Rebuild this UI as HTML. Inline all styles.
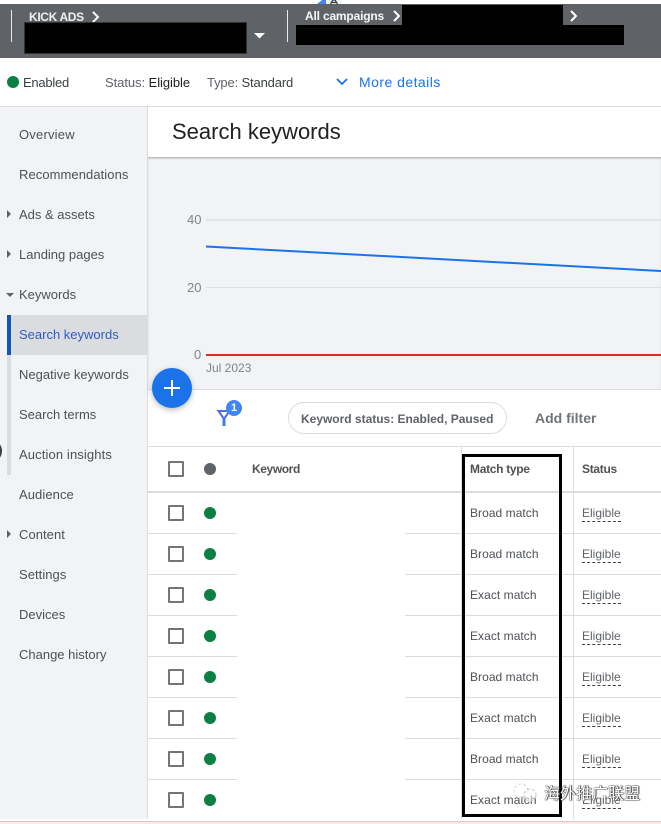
<!DOCTYPE html>
<html><head><meta charset="utf-8"><style>
html,body{margin:0;padding:0;background:#fff}
#p{position:relative;width:661px;height:824px;overflow:hidden;background:#fff;font-family:"Liberation Sans",Arial,sans-serif;font-size:13px;color:#5f6368}
#p div,#p span.a{position:absolute}
.t{white-space:nowrap;line-height:16px}
.nav{left:19px;color:#4d5156;font-size:13px;letter-spacing:0}
.h{background:#dadce0;height:1px}
.v{background:#dadce0;width:1px}
.cb{left:168px;width:12px;height:12px;border:2px solid #757575;border-radius:1px}
.dot{left:204px;width:12px;height:12px;border-radius:50%;background:#0b8043}
.m{left:470px;font-size:12px;color:#4d5156;letter-spacing:.05px}
.e{left:582px;font-size:12px;color:#5f6368;border-bottom:1px dashed #3c4043;line-height:14px;height:15px}
.bk{background:#000}
.th{font-size:12px;color:#3c4043;font-weight:bold;opacity:.9;top:461px}
</style></head><body><div id="p">
<div style="left:0;top:4px;width:661px;height:54px;background:#5f6368"></div>
<svg style="position:absolute;left:316px;top:0" width="28" height="6"><path d="M1 4L6 0h6v4z" fill="#4285f4"/><path d="M10 0h16v3q0 1-1 1H10z" fill="#f1f3f4"/><path d="M14.500 4L17 0h2l2.500 4M16 2.500h4" fill="none" stroke="#3c4043" stroke-width="1.300"/></svg>
<div class="v" style="left:11px;top:10px;height:32px;background:#e8eaed"></div>
<div class="v" style="left:287px;top:10px;height:32px;background:#e8eaed"></div>
<div class="t" style="left:29px;top:9px;color:#fff;font-size:12px;font-weight:bold;opacity:.9;letter-spacing:-.35px">KICK ADS</div>
<svg style="position:absolute;left:90px;top:10px" width="12" height="14"><path d="M3 2l5 5-5 5" fill="none" stroke="#fff" stroke-width="2"/></svg>
<div class="bk" style="left:24px;top:22px;width:223px;height:32px;border:1px solid #333;box-sizing:border-box"></div>
<svg style="position:absolute;left:253px;top:32px" width="14" height="8"><path d="M1 1h11L6.500 6.500z" fill="#fff"/></svg>
<div class="t" style="left:305px;top:8px;color:#fff;font-size:12px;opacity:.95;font-weight:bold;letter-spacing:-.18px">All campaigns</div>
<svg style="position:absolute;left:391px;top:9px" width="12" height="14"><path d="M3 2l5 5-5 5" fill="none" stroke="#fff" stroke-width="2"/></svg>
<div class="bk" style="left:402px;top:5px;width:161px;height:22px"></div>
<svg style="position:absolute;left:568px;top:9px" width="12" height="14"><path d="M3 2l5 5-5 5" fill="none" stroke="#fff" stroke-width="2"/></svg>
<div class="bk" style="left:296px;top:25px;width:328px;height:20px"></div>

<div style="left:7px;top:76px;width:12px;height:12px;border-radius:50%;background:#0b8043"></div>
<div class="t" style="left:23px;top:75px;color:#3c4043;letter-spacing:-.25px">Enabled</div>
<div class="t" style="left:105px;top:75px;color:#5f6368;letter-spacing:-.06px">Status: <span style="color:#202124">Eligible</span></div>
<div class="t" style="left:207px;top:75px;color:#5f6368;letter-spacing:-.15px">Type: <span style="color:#3c4043">Standard</span></div>
<svg style="position:absolute;left:335px;top:77px" width="14" height="10"><path d="M2 2l5 5 5-5" fill="none" stroke="#1a73e8" stroke-width="1.800"/></svg>
<div class="t" style="left:359px;top:74px;color:#1a73e8;font-size:14px;font-weight:500;letter-spacing:.46px">More details</div>
<div class="h" style="left:0;top:106px;width:661px;height:1px"></div>

<div style="left:0;top:107px;width:147px;height:712px;background:#f1f3f4"></div>
<div class="v" style="left:147px;top:107px;height:712px"></div>
<div style="left:7px;top:315px;width:140px;height:40px;background:#dadce0"></div>
<div style="left:7px;top:315px;width:4px;height:40px;background:#1557b0"></div>
<div style="left:7px;top:355px;width:4px;height:120px;background:#dadce0"></div>
<div style="left:-8px;top:443px;width:10px;height:16px;border-radius:50%;background:#3c4043"></div>
<div class="t nav" style="top:127px;letter-spacing:.2px">Overview</div>
<div class="t nav" style="top:167px;letter-spacing:.07px">Recommendations</div>
<div class="t nav" style="top:207px">Ads &amp; assets</div>
<div class="t nav" style="top:247px">Landing pages</div>
<div class="t nav" style="top:287px">Keywords</div>
<div class="t nav" style="top:327px;color:#2f5cc2">Search keywords</div>
<div class="t nav" style="top:367px">Negative keywords</div>
<div class="t nav" style="top:407px">Search terms</div>
<div class="t nav" style="top:447px;letter-spacing:.12px">Auction insights</div>
<div class="t nav" style="top:487px;letter-spacing:.08px">Audience</div>
<div class="t nav" style="top:527px;letter-spacing:.05px">Content</div>
<div class="t nav" style="top:567px;letter-spacing:.05px">Settings</div>
<div class="t nav" style="top:607px">Devices</div>
<div class="t nav" style="top:647px">Change history</div>
<svg style="position:absolute;left:5px;top:208px" width="8" height="12"><path d="M2 2l4 4-4 4z" fill="#5f6368"/></svg>
<svg style="position:absolute;left:5px;top:248px" width="8" height="12"><path d="M2 2l4 4-4 4z" fill="#5f6368"/></svg>
<svg style="position:absolute;left:5px;top:290px" width="10" height="10"><path d="M1 3h8L5 7z" fill="#5f6368"/></svg>
<svg style="position:absolute;left:5px;top:528px" width="8" height="12"><path d="M2 2l4 4-4 4z" fill="#5f6368"/></svg>

<div class="t" style="left:172px;top:118px;font-size:22px;line-height:28px;color:#202124">Search keywords</div>
<div style="left:148px;top:157px;width:513px;height:232px;background:#f1f3f4;box-shadow:inset 0 2px 2px -1px rgba(60,64,67,.45)"></div>
<div class="h" style="left:206px;top:219px;width:455px;height:2px;background:#e3e4e6"></div>
<div class="h" style="left:206px;top:287px;width:455px;background:#dcdee0"></div>
<svg style="position:absolute;left:206px;top:240px" width="455" height="120"><path d="M0 6.500L455 31" fill="none" stroke="#1a73e8" stroke-width="2"/></svg>
<div style="left:206px;top:354px;width:455px;height:2px;background:#d93025"></div>
<div class="t" style="left:187px;top:212px;color:#80868b">40</div>
<div class="t" style="left:187px;top:280px;color:#80868b">20</div>
<div class="t" style="left:194px;top:347px;color:#80868b">0</div>
<div class="t" style="left:206px;top:360px;color:#80868b;font-size:12px">Jul 2023</div>
<div class="h" style="left:148px;top:389px;width:513px"></div>

<div style="left:152px;top:368px;width:40px;height:40px;border-radius:50%;background:#1a73e8;box-shadow:0 2px 6px rgba(60,64,67,.35)"></div>
<div style="left:164px;top:387px;width:16px;height:2px;background:#fff"></div>
<div style="left:171px;top:380px;width:2px;height:16px;background:#fff"></div>

<svg style="position:absolute;left:215px;top:408px" width="20" height="20"><path d="M3.500 3h11L9 11z" fill="none" stroke="#4a6cf0" stroke-width="2"/><path d="M7.500 10h3v8h-3z" fill="#3f7bf0"/></svg>
<div style="left:226px;top:400px;width:16px;height:16px;border-radius:50%;background:#4285f4"></div>
<div class="t" style="left:226px;top:400px;width:16px;text-align:center;color:#fff;font-size:11px;font-weight:bold">1</div>

<div style="left:288px;top:402px;width:217px;height:30px;border:1px solid #dadce0;border-radius:16px"></div>
<div class="t" style="left:301px;top:411px;color:#5f6368;font-weight:bold;font-size:12px;letter-spacing:-.01px">Keyword status: Enabled, Paused</div>
<div class="t" style="left:535px;top:410px;color:#70757a;font-size:14px;font-weight:bold;letter-spacing:0">Add filter</div>

<div class="h" style="left:148px;top:446px;width:513px"></div>
<div class="h" style="left:148px;top:491px;width:513px;height:2px"></div>
<div class="cb" style="top:461px"></div>
<div class="dot" style="top:463px;background:#5f6368"></div>
<div class="t th" style="left:252px;letter-spacing:-.4px">Keyword</div>
<div class="t th" style="left:470px;letter-spacing:-.3px">Match type</div>
<div class="t th" style="left:582px;letter-spacing:-.3px">Status</div>
<div class="v" style="left:461px;top:447px;height:372px"></div>
<div class="v" style="left:573px;top:447px;height:372px"></div>

<div class="h" style="left:148px;top:533px;width:89px"></div><div class="h" style="left:405px;top:533px;width:256px"></div>
<div class="h" style="left:148px;top:574px;width:89px"></div><div class="h" style="left:405px;top:574px;width:256px"></div>
<div class="h" style="left:148px;top:615px;width:89px"></div><div class="h" style="left:405px;top:615px;width:256px"></div>
<div class="h" style="left:148px;top:656px;width:89px"></div><div class="h" style="left:405px;top:656px;width:256px"></div>
<div class="h" style="left:148px;top:697px;width:89px"></div><div class="h" style="left:405px;top:697px;width:256px"></div>
<div class="h" style="left:148px;top:738px;width:89px"></div><div class="h" style="left:405px;top:738px;width:256px"></div>
<div class="h" style="left:148px;top:779px;width:89px"></div><div class="h" style="left:405px;top:779px;width:256px"></div>

<div class="cb" style="top:505px"></div><div class="dot" style="top:507px"></div><div class="t m" style="top:505px">Broad match</div><div class="t e" style="top:506px">Eligible</div>
<div class="cb" style="top:546px"></div><div class="dot" style="top:548px"></div><div class="t m" style="top:546px">Broad match</div><div class="t e" style="top:547px">Eligible</div>
<div class="cb" style="top:587px"></div><div class="dot" style="top:589px"></div><div class="t m" style="top:587px">Exact match</div><div class="t e" style="top:588px">Eligible</div>
<div class="cb" style="top:628px"></div><div class="dot" style="top:630px"></div><div class="t m" style="top:628px">Exact match</div><div class="t e" style="top:629px">Eligible</div>
<div class="cb" style="top:669px"></div><div class="dot" style="top:671px"></div><div class="t m" style="top:669px">Broad match</div><div class="t e" style="top:670px">Eligible</div>
<div class="cb" style="top:710px"></div><div class="dot" style="top:712px"></div><div class="t m" style="top:710px">Exact match</div><div class="t e" style="top:711px">Eligible</div>
<div class="cb" style="top:751px"></div><div class="dot" style="top:753px"></div><div class="t m" style="top:751px">Broad match</div><div class="t e" style="top:752px">Eligible</div>
<div class="cb" style="top:792px"></div><div class="dot" style="top:794px"></div><div class="t m" style="top:792px">Exact match</div><div class="t e" style="top:793px">Eligible</div>

<div style="left:462px;top:454px;width:94px;height:357px;border:3px solid #000;box-sizing:content-box"></div>

<svg style="position:absolute;left:510px;top:782px" width="30" height="22"><circle cx="11" cy="9" r="7" fill="rgba(255,255,255,.5)" stroke="#ddd" stroke-width="1.200" stroke-dasharray="3 2"/><circle cx="20" cy="13" r="6" fill="rgba(255,255,255,.5)" stroke="#ccc" stroke-width="1.200" stroke-dasharray="3 2"/></svg>
<div class="t" style="left:544px;top:786px;font-family:'Liberation Sans','Noto Sans CJK SC',sans-serif;font-size:16px;line-height:18px;color:#fff;text-shadow:0 0 1px #222,0 0 1px #222,1px 0 1px #444;letter-spacing:0">海外推广联盟</div>

<div style="left:0;top:821px;width:661px;height:3px;background:#fbe9e9;border-top:1px solid #e0c8c8;box-sizing:border-box"></div>
</div></body></html>
